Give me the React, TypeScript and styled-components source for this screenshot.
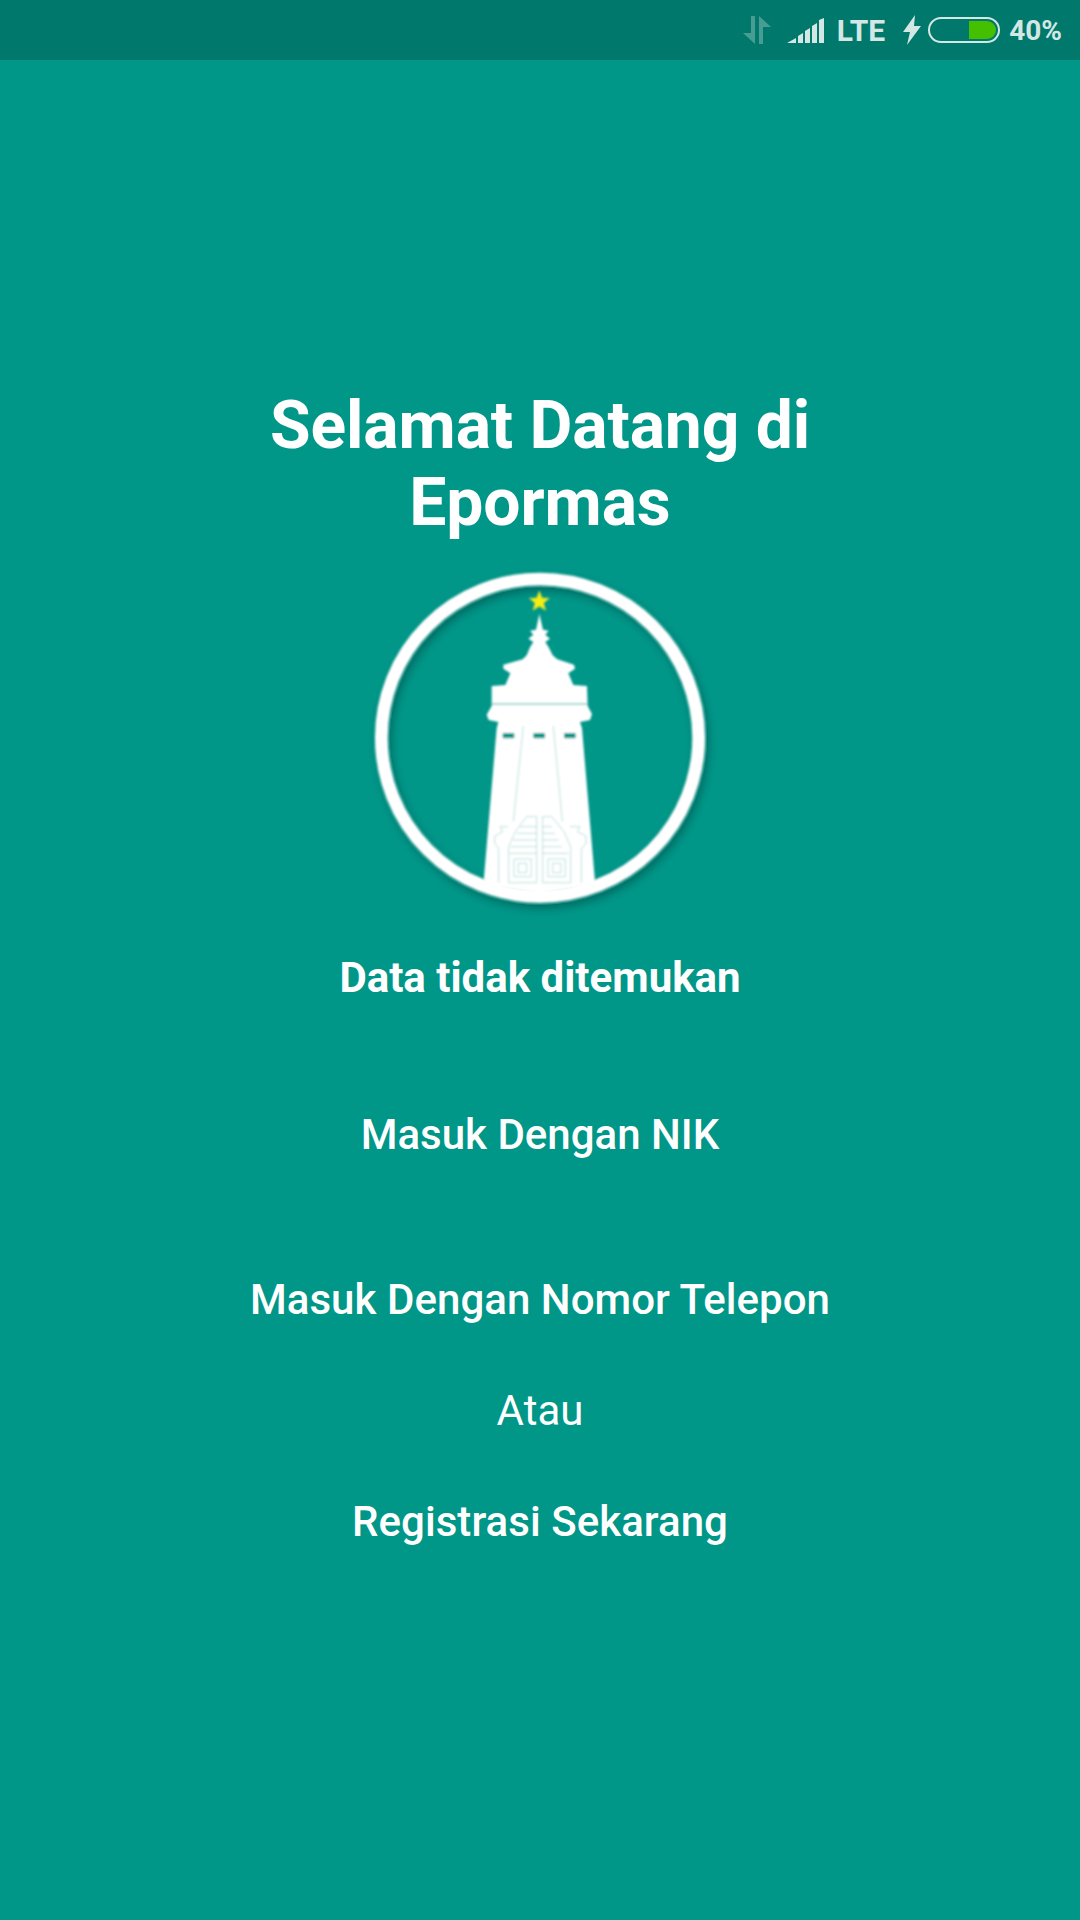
import * as React from 'react';
import styled, { createGlobalStyle } from 'styled-components';

const GlobalStyle = createGlobalStyle`
  html, body {
    margin: 0;
    padding: 0;
    background: #009688;
  }
  * {
    box-sizing: border-box;
  }
`;

const StatusIcons = (): JSX.Element => (
  <>
    <DataIcon width="30" height="30" viewBox="0 0 30 30">
      <path d="M13 1v28L1 18h8V1zM17 29V1l12 11h-8v17z" fill="#fff" fillOpacity="0.28" />
    </DataIcon>
    <SignalIcon width="37" height="26" viewBox="0 0 37 26">
      <path
        d="M0 25l9-5v5zM11 18l5-3v10h-5zM18 13l5-3v15h-5zM25 8l5-3v20h-5zM32 2l5-2v25h-5z"
        fill="#d3e8e5"
      />
    </SignalIcon>
    <StatusText>LTE</StatusText>
    <BoltIcon width="18" height="30" viewBox="0 0 18 30">
      <path d="M12 0L0 17h7L4 30l14-19h-7z" fill="#d3e8e5" />
    </BoltIcon>
    <Battery>
      <BatteryFill />
    </Battery>
    <BatteryText>40%</BatteryText>
  </>
);

const Logo = (): JSX.Element => (
  <LogoSvg width="360" height="360" viewBox="0 0 1080 1080">
    <defs>
      <filter id="ringShadow" x="-10%" y="-10%" width="125%" height="125%">
        <feGaussianBlur in="SourceAlpha" stdDeviation="14" />
        <feOffset dx="8" dy="14" />
        <feComponentTransfer>
          <feFuncA type="linear" slope="0.32" />
        </feComponentTransfer>
        <feMerge>
          <feMergeNode />
          <feMergeNode in="SourceGraphic" />
        </feMerge>
      </filter>
      <filter id="soft">
        <feGaussianBlur stdDeviation="2.6" />
      </filter>
    </defs>
    <g filter="url(#ringShadow)">
      <circle cx="540" cy="533" r="476" fill="none" stroke="#fff" strokeWidth="38" filter="url(#soft)" />
    </g>
    <g filter="url(#soft)">
      <path
        fill="#fff"
        d="M538 162L549 209L566 212L556 224L570 236L556 246L566 262L578 286L592 298L642 314L645 326L625 340L640 375L681 378L683 438L696 462L690 480L660 486L666 505L706 975L540 1000L370 975L410 505L415 486L386 480L380 464L395 438L395 378L436 375L451 340L430 326L430 314L488 298L500 286L510 262L520 246L505 236L520 224L510 212L528 209Z"
      />
      <path d="M396 432H682" stroke="#7fcac2" strokeWidth="4" />
      <g fill="#009688">
        <rect x="428" y="519" width="35" height="16" rx="3" />
        <rect x="520" y="519" width="35" height="16" rx="3" />
        <rect x="612" y="519" width="35" height="16" rx="3" />
      </g>
      <g fill="none" stroke="#a8dad4" strokeWidth="2.5">
        <path d="M490 498L460 785M580 498L607 785" />
        <path d="M500 770H530V968H446V860L466 815L500 770ZM575 770H548V968H632V860L612 815L575 770Z" />
        <path d="M480 800H530M470 820H530M460 840H530M452 860H530M448 880H530M575 800H548M585 820H548M595 840H548M605 860H548M625 880H548" />
        <path d="M462 897H514V950H462ZM475 910H500V938H475ZM564 897H616V950H564ZM578 910H603V938H578Z" />
        <path d="M445 800H420L428 815L404 828L404 850L416 866V968M630 800H660L652 815L678 828L678 850L664 866V968" />
      </g>
      <path
        d="M538 93L546 114L568 115L551 129L557 151L538 139L519 151L525 129L508 115L530 114Z"
        fill="#f6ee0a"
        stroke="#b9d84a"
        strokeWidth="2"
      />
    </g>
  </LogoSvg>
);

const App = (): JSX.Element => (
  <Screen>
    <GlobalStyle />
    <StatusBar>
      <StatusIcons />
    </StatusBar>
    <Content>
      <Title>
        Selamat Datang di
        <br />
        Epormas
      </Title>
      <Logo />
      <Message>Data tidak ditemukan</Message>
      <LoginLink>Masuk Dengan NIK</LoginLink>
      <PhoneLink>Masuk Dengan Nomor Telepon</PhoneLink>
      <OrText>Atau</OrText>
      <RegisterLink>Registrasi Sekarang</RegisterLink>
    </Content>
  </Screen>
);

export default App;

const Screen = styled.div`
  width: 1080px;
  height: 1920px;
  overflow: hidden;
  display: flex;
  flex-direction: column;
  background: #009688;
  color: #fff;
  font-family: Roboto, 'Liberation Sans', sans-serif;
`;

const StatusBar = styled.div`
  height: 60px;
  flex-shrink: 0;
  background: #00786b;
  display: flex;
  align-items: center;
  justify-content: flex-end;
  padding-right: 18px;
`;

const DataIcon = styled.svg`
  margin-right: 15px;
`;

const SignalIcon = styled.svg`
  margin-right: 13px;
  margin-top: 1px;
`;

const StatusText = styled.span`
  font-size: 30px;
  font-weight: 700;
  color: #d3e8e5;
  margin-right: 18px;
`;

const BoltIcon = styled.svg`
  margin-right: 7px;
`;

const Battery = styled.div`
  width: 72px;
  height: 26px;
  border: 2px solid #d3e8e5;
  border-radius: 13px;
  padding: 2px;
  display: flex;
  justify-content: flex-end;
  margin-right: 9px;
`;

const BatteryFill = styled.div`
  width: 27px;
  height: 100%;
  background: #45c000;
  border-radius: 0 9px 9px 0;
`;

const BatteryText = styled.span`
  font-size: 28px;
  font-weight: 700;
  color: #d3e8e5;
`;

const Content = styled.div`
  display: flex;
  flex-direction: column;
  align-items: center;
  padding-top: 327px;
`;

const Title = styled.h1`
  margin: 0;
  font-size: 66px;
  line-height: 77px;
  font-weight: 700;
  text-align: center;
  letter-spacing: -0.1px;
`;

const LogoSvg = styled.svg`
  margin-top: 19px;
  display: block;
`;

const Message = styled.div`
  font-size: 42px;
  line-height: 50px;
  font-weight: 700;
  margin-top: 33px;
`;

const LoginLink = styled.div`
  font-size: 42px;
  line-height: 50px;
  font-weight: 500;
  margin-top: 107px;
`;

const PhoneLink = styled(LoginLink)`
  margin-top: 115px;
  letter-spacing: 0.05px;
`;

const OrText = styled.div`
  font-size: 42px;
  line-height: 50px;
  font-weight: 400;
  margin-top: 61px;
`;

const RegisterLink = styled(LoginLink)`
  margin-top: 61px;
  letter-spacing: 0.05px;
`;
